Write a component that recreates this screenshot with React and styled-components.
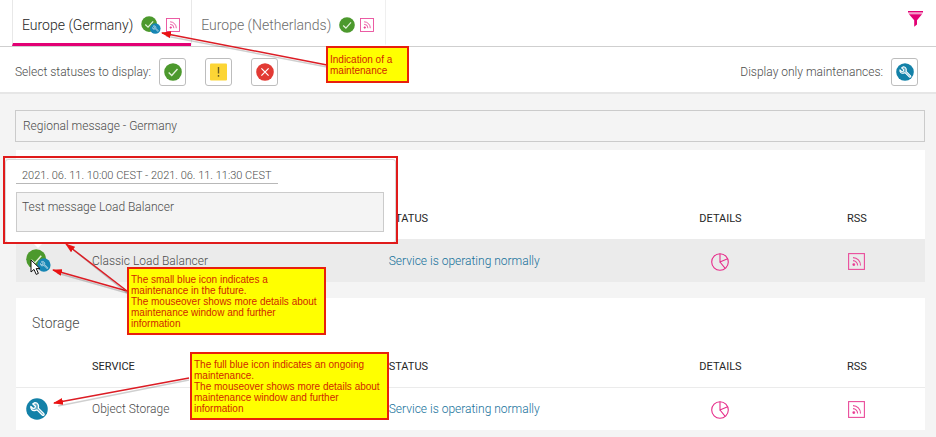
import React from "react";
import styled, { createGlobalStyle } from "styled-components";

const GlobalStyle = createGlobalStyle`
  *, *::before, *::after { box-sizing: border-box; }
  body {
    margin: 0;
    background: #f4f4f4;
    color: #4c4c4c;
    font: 300 12px/20px Roboto, "Liberation Sans", sans-serif;
  }
`;

const MAGENTA = "#e20074";

const Page = styled.div`
  position: relative;
  min-height: 100vh;
`;

const Header = styled.header`
  display: flex;
  justify-content: space-between;
  align-items: flex-start;
  padding: 0 12px;
  background: #fff;
  border-bottom: 1px solid #cfcfcf;
`;

const Tabs = styled.nav`
  display: flex;
`;

const Tab = styled.div`
  display: flex;
  align-items: center;
  gap: 5px;
  height: 46px;
  padding: 6px 11px 0 9px;
  border-left: 1px solid #e8e8e8;
  border-bottom: 3px solid ${(p) => (p.$active ? MAGENTA : "transparent")};

  &:last-child {
    border-right: 1px solid #efefef;
  }
`;

const TabButton = styled.button`
  display: flex;
  align-items: center;
  gap: 8px;
  padding: 0;
  border: 0;
  background: none;
  color: ${(p) => (p.$active ? "#262626" : "#6c6c6c")};
  font: inherit;
  font-size: 14px;
  white-space: nowrap;
  cursor: pointer;
`;

const FilterButton = styled.button`
  display: flex;
  margin: 11px 1px 0 0;
  padding: 0;
  border: 0;
  background: none;
  cursor: pointer;
`;

const Toolbar = styled.div`
  display: flex;
  justify-content: space-between;
  align-items: center;
  height: 47px;
  padding: 4px 18px 0 15px;
  background: #fff;
  border-bottom: 2px solid #e6e6e6;
`;

const ToolGroup = styled.div`
  display: flex;
  align-items: center;
  gap: 8px;
`;

const ToggleSet = styled.div`
  display: flex;
  gap: 19px;
`;

const Toggle = styled.button`
  display: grid;
  place-items: center;
  width: 27px;
  height: 28px;
  padding: 0;
  border: 1px solid #bdbdbd;
  border-radius: 3px;
  background: #fff;
  cursor: pointer;
`;

const Main = styled.main`
  display: flex;
  flex-direction: column;
  gap: 16px;
  padding: 16px 11px 6px 15px;
`;

const Message = styled.p`
  margin: 0 0 -8px;
  padding: 5px 7px;
  border: 1px solid #cbcbcb;
  background: #f4f4f4;
`;

const Card = styled.section`
  position: relative;
  margin-left: 1px;
  background: #fff;
`;

const CardTitle = styled.h2`
  height: 49px;
  margin: 0;
  padding: 15px 16px 0;
  font-size: 14px;
  font-weight: 300;
`;

const Table = styled.table`
  width: 100%;
  table-layout: fixed;
  border-collapse: collapse;
`;

const Col = styled.col`
  width: ${(p) => p.$w};
`;

const Th = styled.th`
  height: 40px;
  padding: 0;
  color: #262626;
  font-size: 11px;
  font-weight: 400;
  text-align: ${(p) => (p.$center ? "center" : "left")};
`;

const Row = styled.tr`
  background: ${(p) => (p.$hover ? "#ebebeb" : "#fff")};
  border-top: 1px solid #ebebeb;
`;

const Td = styled.td`
  height: 43px;
  padding: 0;
  text-align: ${(p) => (p.$center ? "center" : "left")};

  &:first-child {
    padding-left: 10px;
  }

  svg {
    display: inline-block;
    vertical-align: middle;
  }
`;

const Link = styled.a`
  color: #14709a;
  text-decoration: none;
`;

const IconLink = styled.a`
  display: inline-flex;
  vertical-align: middle;
`;

const Popover = styled.div`
  position: absolute;
  top: 9px;
  left: -11px;
  width: 391px;
  height: 84px;
  padding: 9px 11px 0 10px;
  border: 1px solid #d8d8d8;
  border-radius: 3px;
  background: #fff;

  &::after {
    content: "";
    position: absolute;
    top: 82px;
    left: 26px;
    border: 6px solid transparent;
    border-top-color: #fff;
    border-bottom: 0;
  }
`;

const Period = styled.div`
  width: fit-content;
  padding: 0 6px;
  border-bottom: 1px solid #b8b8b8;
  font-size: 11px;
  line-height: 14px;
  white-space: nowrap;
`;

const PopoverText = styled.div`
  height: 40px;
  margin-top: 8px;
  padding: 4px 5px;
  border: 1px solid #cbcbcb;
  background: #f4f4f4;
`;

const Notes = styled.div`
  position: absolute;
  inset: 0;
  pointer-events: none;
`;

const Highlight = styled.div`
  position: absolute;
  left: 3px;
  top: 156px;
  width: 395px;
  height: 88px;
  border: 2px solid #e01b1b;
`;

const Note = styled.p`
  position: absolute;
  left: ${(p) => p.$x}px;
  top: ${(p) => p.$y}px;
  width: ${(p) => p.$w}px;
  height: ${(p) => p.$h}px;
  margin: 0;
  padding: ${(p) => p.$pad}px 0 0 2px;
  border: 2px solid #e8200c;
  background: #ff0;
  color: #d02800;
  font: 400 10px/11px "Liberation Sans", Arial, sans-serif;
  white-space: pre-line;
`;

const Arrows = styled.svg`
  position: absolute;
  left: 0;
  top: 0;
`;

const Cursor = styled.svg`
  position: absolute;
  left: 14px;
  top: 109px;
`;

const Wrench = () => (
  <g fill="none" stroke="#fff" strokeLinecap="round" strokeLinejoin="round">
    <path d="M6.2 5.4 8.6 7.6 8 9.2 6.2 9.4 4.4 7.6C4 10 5.600 11.800 8 11.400L10 10.800 15 15.600C15.800 16.200 17 15.200 16.200 14.200L11.200 9.200C12 7 10.800 4.200 8.200 4.200Z" strokeWidth="1.200" fill="#ffffff55" />
  </g>
);

const Check = ({ size, future }) => (
  <svg width={future ? size + 4 : size} height={future ? size + 2 : size} viewBox={future ? "0 0 24.600 22.400" : "0 0 20 20"} aria-hidden="true">
    <circle cx="10" cy="10" r="9.800" fill="#4c992d" />
    <path d="M5.200 10.600 8.600 13.800 15 6.600" fill="none" stroke="#e4f1dc" strokeWidth="1.500" />
    {future && (
      <g>
        <circle cx="17.600" cy="15.600" r="6.600" fill="#1686b4" />
        <g transform="translate(11.600 9.600) scale(.6)" opacity=".75">
          <Wrench />
        </g>
      </g>
    )}
  </svg>
);

const Maintenance = ({ size }) => (
  <svg width={size} height={size} viewBox="0 0 20 20" aria-hidden="true">
    <circle cx="10" cy="10" r="9.800" fill="#1381a8" />
    <Wrench />
  </svg>
);

const Warning = () => (
  <svg width="17" height="18" viewBox="0 0 17 18" aria-hidden="true">
    <rect y=".5" width="17" height="17" rx="1" fill="#fcd535" />
    <path d="M8.500 4v6.500M8.500 12v1.800" stroke="#6b5c20" strokeWidth="1.400" />
  </svg>
);

const ErrorIcon = () => (
  <svg width="18" height="18" viewBox="0 0 18 18" aria-hidden="true">
    <circle cx="9" cy="9" r="8.800" fill="#e23a34" />
    <path d="M5.400 5.400 12.600 12.600M12.600 5.400 5.400 12.600" stroke="#fff" strokeWidth="1.200" />
  </svg>
);

const Rss = ({ size }) => (
  <svg width={size} height={size} viewBox="0 0 17 17" fill="none" stroke="#ea4c9b" strokeWidth="1.100" aria-hidden="true">
    <rect x=".6" y=".6" width="15.800" height="15.800" />
    <path d="M5 4.600A7.600 7.600 0 0 1 12.500 12.400M5 7.600A4.700 4.700 0 0 1 9.600 12.400" />
    <circle cx="5.800" cy="11.600" r=".9" fill="#e20074" />
  </svg>
);

const Pie = () => (
  <svg width="18" height="18" viewBox="0 0 18 18" fill="none" stroke="#e62c8a" strokeWidth="1.100" aria-hidden="true">
    <circle cx="9" cy="9" r="8.300" />
    <path d="M9 .7V9L16.600 5.800M9 9 14.200 15.300" />
  </svg>
);

const Funnel = () => (
  <svg width="15" height="16" viewBox="0 0 15 16" aria-hidden="true">
    <path d="M0 0H15V1.600H0Z" fill={MAGENTA} />
    <path d="M.3 1.600H14.700L14 3.200H1Z" fill="#f39cc8" />
    <path d="M1 3.200H14L9 9.200V13.400L6.200 15.800V9.200Z" fill={MAGENTA} />
  </svg>
);

const RssLink = ({ size, name }) => (
  <IconLink href="#rss" aria-label={`RSS feed: ${name}`}>
    <Rss size={size} />
  </IconLink>
);

const arrows = [
  { from: [327, 65], to: [162, 33] },
  { from: [127, 291], to: [53, 270] },
  { from: [127, 291], to: [66, 244] },
  { from: [189, 378], to: [54, 403] },
];

const notes = [
  { x: 326, y: 46, w: 83, h: 37, pad: 6, text: "Indication of a\nmaintenance" },
  {
    x: 127, y: 267, w: 199, h: 68, pad: 5,
    text: "The small blue icon indicates a\nmaintenance in the future.\nThe mouseover shows more details about\nmaintenance window and further\ninformation",
  },
  {
    x: 190, y: 352, w: 199, h: 68, pad: 5,
    text: "The full blue icon indicates an ongoing\nmaintenance.\nThe mouseover shows more details about\nmaintenance window and further\ninformation",
  },
];

function ServiceTable({ name, hover, icon }) {
  return (
    <Table>
      <colgroup>
        <Col $w="76px" />
        <Col />
        <Col $w="29%" />
        <Col $w="15%" />
        <Col $w="15%" />
      </colgroup>
      <thead>
        <tr>
          <Th as="td" />
          <Th scope="col" aria-label="Service">{hover ? null : "SERVICE"}</Th>
          <Th scope="col">STATUS</Th>
          <Th scope="col" $center>DETAILS</Th>
          <Th scope="col" $center>RSS</Th>
        </tr>
      </thead>
      <tbody>
        <Row $hover={hover}>
          <Td>{icon}</Td>
          <Td>{name}</Td>
          <Td><Link href="#status">Service is operating normally</Link></Td>
          <Td $center>
            <IconLink href="#details" aria-label={`Details: ${name}`}><Pie /></IconLink>
          </Td>
          <Td $center><RssLink size={17} name={name} /></Td>
        </Row>
      </tbody>
    </Table>
  );
}

export default function App() {
  return (
    <Page>
      <GlobalStyle />
      <Header>
        <Tabs aria-label="Regions">
          <Tab $active>
            <TabButton $active aria-current="page">
              Europe (Germany)
              <Check size={16} future />
            </TabButton>
            <RssLink size={14} name="Germany" />
          </Tab>
          <Tab>
            <TabButton>
              Europe (Netherlands)
              <Check size={16} />
            </TabButton>
            <RssLink size={14} name="Netherlands" />
          </Tab>
        </Tabs>
        <FilterButton aria-label="Filter"><Funnel /></FilterButton>
      </Header>
      <Toolbar>
        <ToolGroup role="group" aria-labelledby="statuses">
          <span id="statuses">Select statuses to display:</span>
          <ToggleSet>
            <Toggle aria-label="Operating normally"><Check size={18} /></Toggle>
            <Toggle aria-label="Warning"><Warning /></Toggle>
            <Toggle aria-label="Error"><ErrorIcon /></Toggle>
          </ToggleSet>
        </ToolGroup>
        <ToolGroup>
          <span id="maintenances">Display only maintenances:</span>
          <Toggle aria-labelledby="maintenances"><Maintenance size={18} /></Toggle>
        </ToolGroup>
      </Toolbar>
      <Main>
        <Message>Regional message - Germany</Message>
        <Card>
          <CardTitle as="div" />
          <ServiceTable name="Classic Load Balancer" hover icon={<Check size={21} future />} />
          <Popover role="tooltip">
            <Period>2021. 06. 11. 10:00 CEST - 2021. 06. 11. 11:30 CEST</Period>
            <PopoverText>Test message Load Balancer</PopoverText>
          </Popover>
          <Cursor width="12" height="17" viewBox="0 0 12 17" aria-hidden="true">
            <path d="M1 1V13L4 10.400 6.200 15.400 8.400 14.400 6.200 9.600H10Z" fill="#fff" stroke="#111" />
          </Cursor>
        </Card>
        <Card>
          <CardTitle>Storage</CardTitle>
          <ServiceTable name="Object Storage" icon={<Maintenance size={22} />} />
        </Card>
      </Main>
      <Notes>
        <Highlight />
        <Arrows width="420" height="437" aria-hidden="true">
          <defs>
            <marker id="head" viewBox="0 0 10 8" refX="9" refY="4" markerWidth="10" markerHeight="8" markerUnits="userSpaceOnUse" orient="auto">
              <path d="M0 .5 10 4 0 7.500Z" fill="#ea1212" />
            </marker>
          </defs>
          {arrows.map(({ from, to }) => (
            <g key={to.join()} strokeWidth="1.500">
              <path d={`M${from[0]} ${from[1] + 2}L${to[0] + 4} ${to[1] + 3}`} stroke="#00000030" />
              <path d={`M${from}L${to}`} stroke="#dc1c24" markerEnd="url(#head)" />
            </g>
          ))}
        </Arrows>
        {notes.map((n) => (
          <Note key={n.y} $x={n.x} $y={n.y} $w={n.w} $h={n.h} $pad={n.pad}>{n.text}</Note>
        ))}
      </Notes>
    </Page>
  );
}
